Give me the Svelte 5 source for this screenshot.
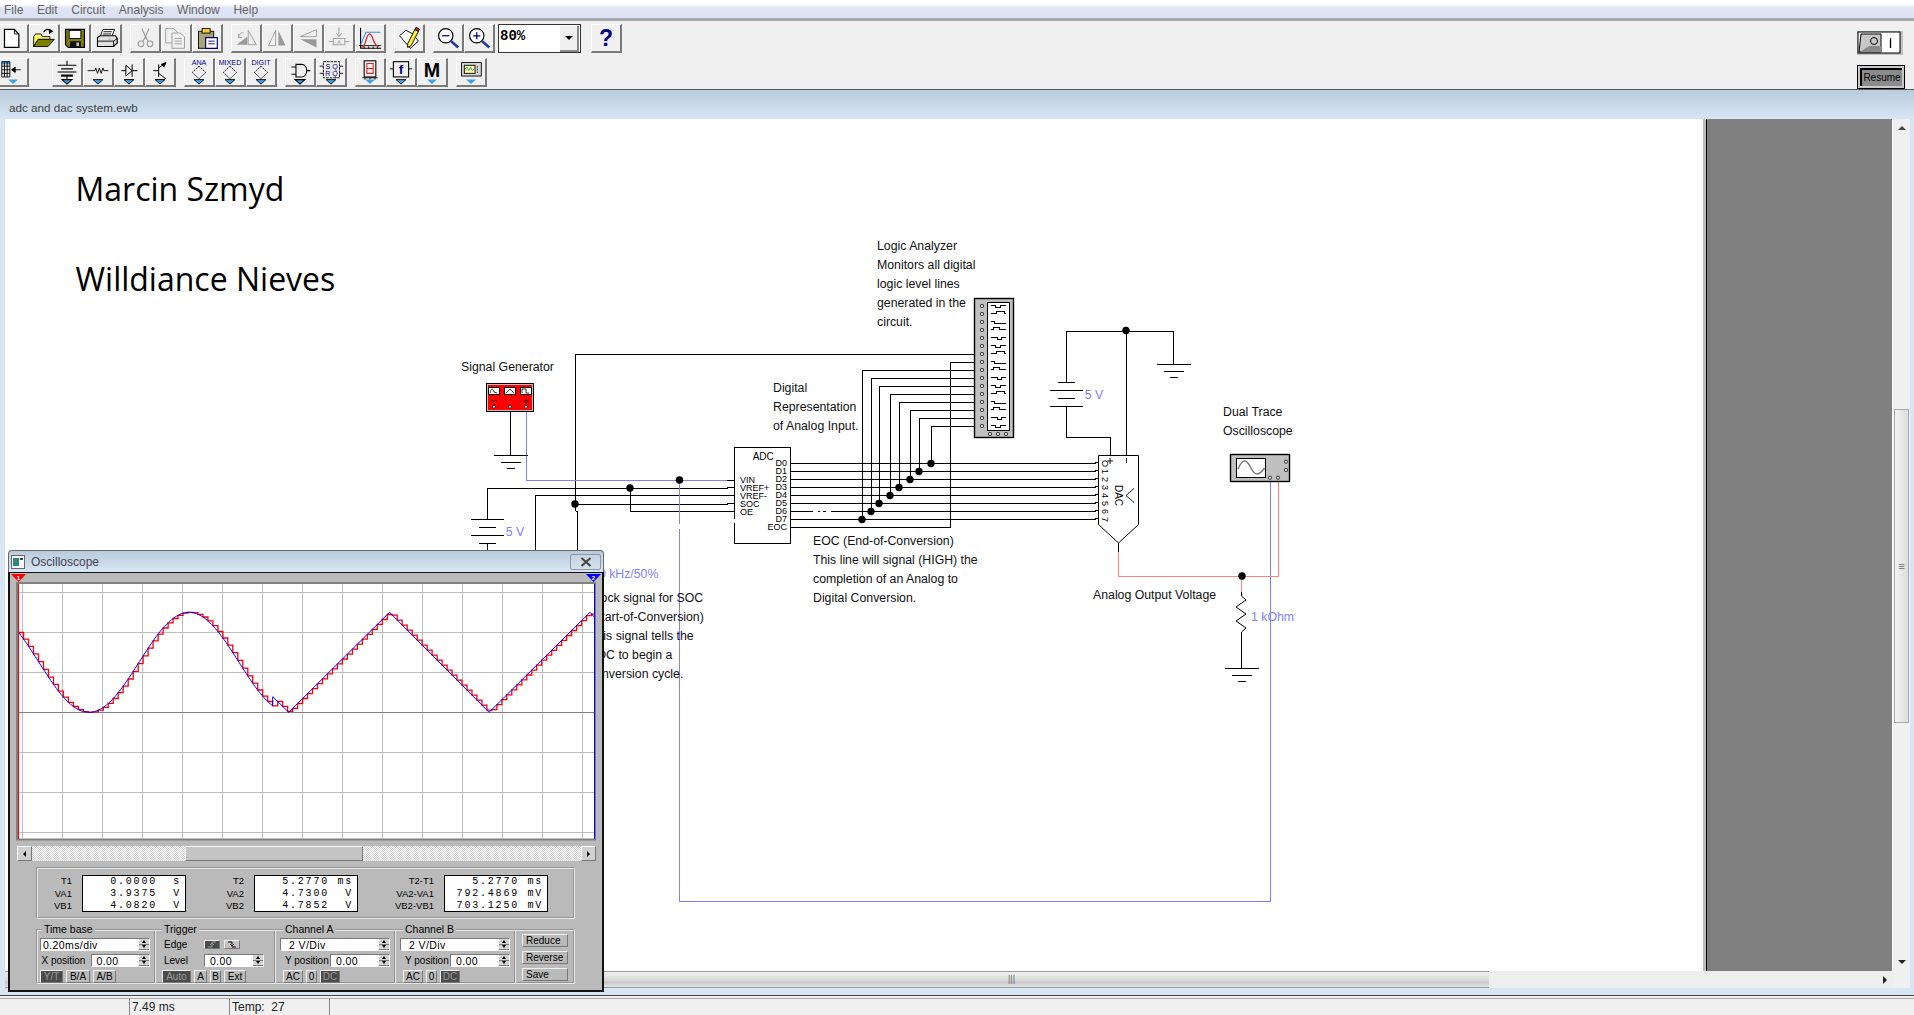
<script>
  // schematic lives in page coordinates, the svg viewBox takes care of the offset
  const menus = ['File', 'Edit', 'Circuit', 'Analysis', 'Window', 'Help'];

  const blackWires = [
    '575.5,511 575.5,354.5 974,354.5',
    '487.5,519 487.5,488.5 727,488.5 727,487.5 734,487.5',
    '535.5,560 535.5,495.5 734,495.5',
    '575.5,504.5 727,504.5 727,503.5 734,503.5',
    '575.5,511 577.5,511 577.5,560',
    '630.5,488 630.5,511.5 734,511.5',
    '510.5,411 510.5,455',
    '727,480.5 734,480.5',
    '790.5,527.5 950.5,527.5 950.5,362.5 974,362.5',
    '1066.5,382 1066.5,331.5 1173.5,331.5 1173.5,364',
    '1126.5,331 1126.5,455',
    '1066.5,406 1066.5,437.5 1110.5,437.5 1110.5,455',
    '1118.5,543 1118.5,552',
    '1241.5,635 1241.5,668',
    '487.5,543 487.5,552'
  ];
  // D0..D7 run to the DAC, each one taps up to the analyzer
  const busX = [931, 919, 910, 899, 890, 879, 871, 862];
  const busRows = busX.map((x, i) => ({ x: x + 0.5, y: 463.5 + 8 * i, top: 426.5 - 8 * i }));

  const grounds = [
    { x: 510.5, y: 455.5 },
    { x: 1173.5, y: 364.5 },
    { x: 1241.5, y: 668.5 }
  ];
  const dots = [
    [679.5, 480], [630, 488], [575, 504], [1126, 330.5], [1242, 576],
    ...busRows.map((r) => [r.x - 0.5, r.y])
  ];
  // small white breaks the screen redraw left behind in the wires
  const breaks = [
    [813, 511, 5], [820, 511, 3], [826, 511, 5], [1075, 480, 4], [1083, 480, 2],
    [1074, 504, 4], [1020, 480, 2], [915, 480, 3], [943, 480, 5], [853, 504, 8], [919, 488, 2]
  ];

  const labels = [
    [877, 247, 'Logic Analyzer'], [877, 266, 'Monitors all digital'], [877, 285, 'logic level lines'],
    [877, 304, 'generated in the'], [877, 323, 'circuit.'],
    [461, 368, 'Signal Generator'],
    [773, 389, 'Digital'], [773, 408, 'Representation'], [773, 427, 'of Analog Input.'],
    [1223, 413, 'Dual Trace'], [1223, 432, 'Oscilloscope'],
    [813, 542, 'EOC (End-of-Conversion)'], [813, 561, 'This line will signal (HIGH) the'],
    [813, 580, 'completion of an Analog to'], [813, 599, 'Digital Conversion.'],
    [1093, 595.5, 'Analog Output Voltage'],
    [589, 599, 'Clock signal for SOC'], [589, 618, '(Start-of-Conversion)'],
    [589, 637, 'This signal tells the'], [589, 656, 'ADC to begin a'], [589, 675, 'conversion cycle.']
  ];
  const blueLabels = [
    [505.7, 533, '5 V'], [1084.7, 395.5, '5 V'], [1251, 618, '1 kOhm'], [575, 575, '1.000 kHz/50%']
  ];
  const adcPins = ['VIN', 'VREF+', 'VREF-', 'SOC', 'OE'];
  const adcOut = ['D0', 'D1', 'D2', 'D3', 'D4', 'D5', 'D6', 'D7', 'EOC'];
  const analyzerRows = Array.from({ length: 16 }, (_, i) => i);
  const stepShapes = ['h5 v2 h5 v-2 h5', 'h6 v-2 h8 v2 h1', 'h4 v2 h11', 'h3 v-2 h6 v2 h6', 'h7 v2 h4 v-2 h4'];
  const genShapes = ['c1 -5 3 -5 4 -1 l3 1', 'l4 -4 l4 4', 'v-4 h4 v4 h3'];

  // scope traces, measured off the reference in its own zoomed units
  const px = (z) => z / 2.529;
  const py = (z) => 545 + z / 3;
  const sine = (z) => 352 - 150 * Math.cos((Math.PI * (z - 478)) / 253);
  const tail = [[690, 455], [730, 502], [985, 202], [1237, 502], [1492, 202], [1502, 215]];

  function trace(z) {
    if (z <= 690) return sine(z);
    for (let i = 0; i < tail.length - 1; i++) {
      const [x0, y0] = tail[i];
      const [x1, y1] = tail[i + 1];
      if (z <= x1) return y0 + ((y1 - y0) * (z - x0)) / (x1 - x0);
    }
    return 215;
  }

  let blueLine = '';
  for (let z = 47; z <= 690; z += 3) blueLine += `${px(z).toFixed(1)},${py(sine(z)).toFixed(1)} `;
  for (const [x, y] of tail) blueLine += `${px(x).toFixed(1)},${py(y).toFixed(1)} `;

  let redLine = '';
  let held = trace(47);
  for (let z = 47; z < 1502; z += 12.6) {
    const next = trace(Math.min(z + 12.6, 1502));
    const xEnd = px(Math.min(z + 12.6, 1502)).toFixed(1);
    redLine += `${px(z).toFixed(1)},${py(held).toFixed(1)} ${xEnd},${py(held).toFixed(1)} `;
    held = next;
  }

  const vGrid = [22.5, 62.5, 102.5, 142.5, 182.5, 222.5, 262.5, 302.5, 342.5, 382.5, 422.5, 462.5, 502.5, 542.5, 582.5];
  const hGrid = [592.5, 632.5, 672.5, 752.5, 792.5, 832.5];

  const readouts = [
    { labels: ['T1', 'VA1', 'VB1'], rows: [['0.0000', 's'], ['3.9375', 'V'], ['4.0820', 'V']] },
    { labels: ['T2', 'VA2', 'VB2'], rows: [['5.2770', 'ms'], ['4.7300', 'V'], ['4.7852', 'V']] },
    { labels: ['T2-T1', 'VA2-VA1', 'VB2-VB1'], rows: [['5.2770', 'ms'], ['792.4869', 'mV'], ['703.1250', 'mV']] }
  ];
</script>

{#snippet spin()}
  <span class="spin"><i class="up"></i><i class="down"></i></span>
{/snippet}

{#snippet drop()}
  <polygon points="10,23 21,23 15.5,28" fill="#3aa0ea" />
{/snippet}

<div class="app">
  <div class="menubar">
    {#each menus as m}<span>{m}</span>{/each}
  </div>
  <div class="menuline"></div>

  <div class="toolbar">
    <div class="rows">
      <div class="row">
        <div class="btn first"><svg viewBox="0 0 31 29"><path d="M6 5H17L22 10V25H6Z" fill="#fff" stroke="#000" stroke-width="1.4" /><path d="M17 5V10H22" fill="none" stroke="#000" /></svg></div>
        <div class="btn"><svg viewBox="0 0 31 29"><path d="M4 24V13L6 10H12L14 13H22V16H9Z" fill="#ffff66" stroke="#000" /><path d="M4 24L9 16H27L20 24Z" fill="#808000" stroke="#000" /><path d="M15 8C17 4 21 4 23 7" fill="none" stroke="#000" stroke-width="1.3" /><path d="M21 4L26 7L21 10Z" fill="#000" /></svg></div>
        <div class="btn"><svg viewBox="0 0 31 29"><path d="M5 5H26V25H8L5 22Z" fill="#808000" stroke="#000" stroke-width="1.4" /><rect x="9" y="6" width="13" height="9" fill="#fff" stroke="#000" /><rect x="10" y="18" width="12" height="7" fill="#111" /><rect x="17" y="19.5" width="3" height="4" fill="#c0c0c0" /></svg></div>
        <div class="btn"><svg viewBox="0 0 31 29"><path d="M12 5H25L22 13H9Z" fill="#fff" stroke="#000" /><path d="M13 7.5H22M12 10H21" stroke="#000" /><path d="M6 14L9 12H26L28 15V20L24 24H6Z" fill="#e0e0e0" stroke="#000" stroke-width="1.3" /><path d="M6 18H24V24M24 18L28 15" fill="none" stroke="#000" /><rect x="18" y="15" width="3" height="1.5" fill="#bb9" /></svg></div>

        <div class="btn grp"><svg viewBox="0 0 31 29" fill="none" stroke="#999" stroke-width="1.2"><path d="M12 4L17 15M20 4L15 15" /><circle cx="11" cy="21" r="3.2" /><circle cx="21" cy="21" r="3.2" /><path d="M13 18L16 13M19 18L16 13" /></svg></div>
        <div class="btn"><svg viewBox="0 0 31 29" fill="#f0f0f0" stroke="#999"><path d="M4 4H13L17 8V20H4Z" /><path d="M11 9H20L25 13V26H11Z" /><path d="M14 15H22M14 18H22M14 21H22" /></svg></div>
        <div class="btn"><svg viewBox="0 0 31 29"><rect x="6" y="7" width="17" height="19" fill="#a6a676" stroke="#000" /><rect x="10" y="4" width="9" height="5" fill="#ffcc33" stroke="#000" /><path d="M14 14H27V26H14Z" fill="#fff" stroke="#000080" stroke-width="1.3" /><path d="M17 18H24M17 21H24" stroke="#000080" /></svg></div>

        <div class="btn grp"><svg viewBox="0 0 31 29"><path d="M5 22L17 13V22Z" fill="#999" /><path d="M18 6L27 22H18Z" fill="none" stroke="#999" /><path d="M8 13C8 9 11 8 13 9M7 10V14H11" fill="none" stroke="#999" /></svg></div>
        <div class="btn"><svg viewBox="0 0 31 29"><path d="M14 6L6 23H14Z" fill="none" stroke="#999" /><path d="M17 6L25 23H17Z" fill="#999" /></svg></div>
        <div class="btn"><svg viewBox="0 0 31 29"><path d="M25 5L7 13H25Z" fill="none" stroke="#999" /><path d="M25 16L7 16L25 25Z" fill="#999" /></svg></div>
        <div class="btn"><svg viewBox="0 0 31 29" fill="none" stroke="#999"><path d="M15.5 3V12M12.5 9L15.5 13L18.5 9" /><rect x="9" y="15" width="13" height="7" /><path d="M4 18.5H9M22 18.5H27" /><text x="15.5" y="21" text-anchor="middle" class="tiny" fill="#999" stroke="none">A</text></svg></div>
        <div class="btn"><svg viewBox="0 0 31 29" fill="none"><path d="M5 3V26H28" stroke="#000" stroke-width="1.2" /><path d="M3 23H28M9 26V24M14 26V24M19 26V24M24 26V24" stroke="#000" /><path d="M5 22L11 8H27" stroke="#3a8ee8" stroke-width="1.2" /><path d="M6 25C11 25 11 10 15 10C19 10 19 24 25 24" stroke="#e02020" stroke-width="1.4" /></svg></div>

        <div class="btn grp"><svg viewBox="0 0 31 29"><path d="M5 12L12 6L20 10L26 18L17 26Z" fill="#fff" stroke="#000" /><path d="M14 21L22 5L26 7L18 23L14 25Z" fill="#ffee33" stroke="#000" /><path d="M22 5L23.5 2.5L27 4.5L26 7Z" fill="#e02020" stroke="#000" /></svg></div>

        <div class="btn grp"><svg viewBox="0 0 31 29" fill="none"><circle cx="13" cy="12" r="8" fill="#fff" stroke="#000" stroke-width="1.3" /><path d="M9 12H17" stroke="#000080" stroke-width="1.4" /><path d="M19 18L27 25" stroke="#2040a0" stroke-width="3" /></svg></div>
        <div class="btn"><svg viewBox="0 0 31 29" fill="none"><circle cx="13" cy="12" r="8" fill="#fff" stroke="#000" stroke-width="1.3" /><path d="M9 12H17M13 8V16" stroke="#000080" stroke-width="1.4" /><path d="M19 18L27 25" stroke="#2040a0" stroke-width="3" /></svg></div>

        <div class="combo">
          <span class="combo-val">80%</span>
          <span class="combo-btn"><i></i></span>
        </div>
        <div class="btn help"><span>?</span></div>
      </div>

      <div class="row">
        <div class="btn first"><svg viewBox="0 0 31 29"><rect x="3" y="3" width="9" height="3" fill="#3aa0ea" /><path d="M3 3H12V20H3ZM3 8H12M3 12H12M3 16H12M6 3V20M9 3V20" fill="none" stroke="#000" /><path d="M14 12H24M14 12L18 9V15Z" stroke="#000" />{@render drop()}</svg></div>
        <div class="btn wide"><svg viewBox="0 0 31 29" stroke="#000" stroke-width="1.2"><path d="M15.5 2V7M5 7H26M9 11H22" fill="none" /><path d="M5 14.5H26" /><path d="M9 18.5H22" stroke-width="2.4" /><path d="M15.5 19V23" />{@render drop()}</svg></div>
        <div class="btn"><svg viewBox="0 0 31 29" fill="none" stroke="#000"><path d="M4 13H12L13 10L15 16L17 10L19 16L21 10L22 13H27" />{@render drop()}</svg></div>
        <div class="btn"><svg viewBox="0 0 31 29" fill="none" stroke="#000" stroke-width="1.1"><path d="M7 13H12M19 13H25M19 6V20" /><path d="M12 7L19 13L12 19Z" />{@render drop()}</svg></div>
        <div class="btn"><svg viewBox="0 0 31 29" fill="none" stroke="#000" stroke-width="1.1"><path d="M8 13H14M14 6V20M14 10L22 4M14 16L22 22" /><path d="M17 6L22 4L20 9Z" fill="#000" />{@render drop()}</svg></div>

        <div class="btn grp"><svg viewBox="0 0 31 29" fill="none" stroke="#000"><text x="15.5" y="7" text-anchor="middle" class="mini" fill="#000080" stroke="none">ANA</text><path d="M15.5 8L23 15L15.5 22L8 15Z" stroke-dasharray="2 1" />{@render drop()}</svg></div>
        <div class="btn"><svg viewBox="0 0 31 29" fill="none" stroke="#000"><text x="15.5" y="7" text-anchor="middle" class="mini" fill="#000080" stroke="none">MIXED</text><path d="M15.5 8L23 15L15.5 22L8 15Z" stroke-dasharray="2 1" />{@render drop()}</svg></div>
        <div class="btn"><svg viewBox="0 0 31 29" fill="none" stroke="#000"><text x="15.5" y="7" text-anchor="middle" class="mini" fill="#000080" stroke="none">DIGIT</text><path d="M15.5 8L23 15L15.5 22L8 15Z" stroke-dasharray="2 1" />{@render drop()}</svg></div>

        <div class="btn grp"><svg viewBox="0 0 31 29" fill="none" stroke="#000" stroke-width="1.2"><path d="M11 6H17C25 6 25 20 17 20H11ZM6 9H11M6 17H11M23 13H27" />{@render drop()}</svg></div>
        <div class="btn"><svg viewBox="0 0 31 29" fill="none" stroke="#000"><rect x="7" y="3" width="18" height="18" stroke-dasharray="3 1" /><path d="M3 8H7M3 16H7M25 8H29M25 16H29" /><text x="12" y="11" text-anchor="middle" class="mini" fill="#000080" stroke="none">S</text><text x="20" y="11" text-anchor="middle" class="mini" fill="#000080" stroke="none">Q</text><text x="12" y="19" text-anchor="middle" class="mini" fill="#000080" stroke="none">R</text><text x="20" y="19" text-anchor="middle" class="mini" fill="#000080" stroke="none">Q</text>{@render drop()}</svg></div>

        <div class="btn grp"><svg viewBox="0 0 31 29" fill="none"><rect x="9" y="2" width="13" height="18" stroke="#000" stroke-width="1.2" /><path d="M12 5H19V16H12ZM12 10.5H19" stroke="#e02020" stroke-width="1.2" /><path d="M7 21H24M10 21V23M15.5 21V23M21 21V23" stroke="#000" />{@render drop()}</svg></div>
        <div class="btn"><svg viewBox="0 0 31 29" fill="none" stroke="#000"><rect x="7" y="3" width="17" height="17" stroke-width="1.2" /><path d="M3 11H7M24 11H28" /><text x="15.5" y="17" text-anchor="middle" class="func" fill="#000080" stroke="none">f</text>{@render drop()}</svg></div>
        <div class="btn"><svg viewBox="0 0 31 29"><text x="15.5" y="20" text-anchor="middle" class="bigm">M</text>{@render drop()}</svg></div>

        <div class="btn grp"><svg viewBox="0 0 31 29"><rect x="5" y="4" width="22" height="15" fill="#d8d8d8" stroke="#000" /><rect x="8" y="7" width="12" height="9" fill="#fff8a0" stroke="#000" /><path d="M9 11L11 9L13 13L15 9L17 13L19 11" fill="none" stroke="#2a9a9a" /><path d="M22.5 8V9.5M22.5 11V12.5M22.5 14V15.5" stroke="#000" />{@render drop()}</svg></div>
      </div>
    </div>

    <div class="power">
      <div class="switch">
        <svg viewBox="0 0 46 24" width="46" height="24">
          <rect width="46" height="24" fill="#c0c0c0" />
          <rect x="1" y="1" width="42" height="21" fill="#fff" stroke="#000" />
          <path d="M2 21L4 3H24V21Z" fill="#c8c8c8" stroke="#000" />
          <path d="M3 21L12 15H24V21Z" fill="#8a8a8a" />
          <circle cx="17" cy="10" r="3.5" fill="none" stroke="#000" />
          <path d="M33.5 7V17" stroke="#000" stroke-width="1.3" />
        </svg>
      </div>
      <div class="resume"><span>Resume</span></div>
    </div>
  </div>

  <div class="doc-title">adc and dac system.ewb</div>

  <div class="mdi">
    <div class="client">
      <svg class="canvas" viewBox="5 119 1698 852" width="1698" height="852">
        <text x="75.5" y="200.5" class="author">Marcin Szmyd</text>
        <text x="75.5" y="291" class="author">Willdiance Nieves</text>

        {#each blackWires as w}<polyline points={w} class="wire" />{/each}

        {#each busRows as r}
          <polyline points="790.5,{r.y} 1093,{r.y} 1098,{r.y - 1}" class="wire" />
          <polyline points="{r.x},{r.y} {r.x},{r.top} 974,{r.top}" class="wire" />
        {/each}

        <polyline points="526.5,411 526.5,480.5 727,480.5" class="blue" />
        <polyline points="679.5,480 679.5,901.5 1270.5,901.5 1270.5,478" class="blue" />
        <polyline points="1118.5,552 1118.5,576.5 1278.5,576.5 1278.5,478" class="red" />
        <polyline points="1241.5,576 1241.5,592" class="red" />

        {#each breaks as [x, y, w]}<rect {x} y={y} width={w} height="2" fill="#fff" />{/each}
        <rect x="678" y="524" width="3" height="5" fill="#fff" />

        {#each grounds as g}
          <path d="M{g.x - 17} {g.y}H{g.x + 17}M{g.x - 10} {g.y + 6.5}H{g.x + 10}M{g.x - 4} {g.y + 13}H{g.x + 4}" class="wire" />
        {/each}
        <!-- batteries: the left one has its long plate on top, the right one is flipped -->
        <path d="M471 519.5H504M479 527.5H496M471 535.5H504M479 543.5H496" class="wire" />
        <path d="M1058 382.5H1075M1050 390.5H1083M1058 398.5H1075M1050 406.5H1083" class="wire" />

        <polyline points="1241.5,592 1241.5,596 1246,600 1236,607 1246,614 1236,621 1246,628 1241.5,632 1241.5,635" fill="none" stroke="#000" />

        <!-- function generator -->
        <rect x="486.5" y="383.5" width="47" height="28" fill="#c0c0c0" stroke="#000" />
        <rect x="488" y="385" width="44" height="25" fill="#f00" />
        {#each [488.5, 504.5, 520.5] as gx, i}
          <rect x={gx} y="387.5" width="11" height="7" fill="#fff" stroke="#000" />
          <path d="M{gx + 1.5} 393 {genShapes[i]}" fill="none" stroke="#000" stroke-width="0.8" />
        {/each}
        {#each [494, 510, 526] as tx}<circle cx={tx} cy="406.7" r="1.5" fill="#fff" stroke="#000" stroke-width="0.8" />{/each}
        <path d="M491.5 401H496.5M523.5 401H528.5M526 398.5V403.5" stroke="#000" stroke-width="0.8" />

        <!-- ADC -->
        <path d="M734.5 519V447.5H790.5V543.5H734.5V523" class="wire" style="fill:#fff" />
        <text x="752.7" y="457" class="chip">ADC</text>
        {#each adcPins as p, i}<text x="740" y={480.5 + 8 * i} class="pin">{p}</text>{/each}
        {#each adcOut as p, i}<text x="787" y={464 + 8 * i} class="pin end">{p}</text>{/each}

        <!-- logic analyzer -->
        <rect x="974.5" y="298.5" width="39" height="139" fill="#c0c0c0" stroke="#000" stroke-width="1.4" />
        <rect x="987.5" y="302.5" width="22" height="128" fill="#fff" stroke="#000" />
        {#each analyzerRows as n}
          <circle cx="982" cy={306 + 8 * n} r="1.6" fill="#fff" stroke="#000" stroke-width="0.8" />
          <path d="M990.5 {305.5 + 8 * n}{stepShapes[n % stepShapes.length]}" class="wire" />
        {/each}
        {#each [990, 998, 1006] as tx}<circle cx={tx} cy="434" r="1.6" fill="#fff" stroke="#000" stroke-width="0.8" />{/each}

        <!-- DAC -->
        <path d="M1098.5 455.5H1138.5V524.5L1118.5 543L1098.5 524.5Z" fill="#fff" stroke="#000" />
        {#each [0, 1, 2, 3, 4, 5, 6, 7] as n}
          <text transform="translate(1104.5 {463.5 + 8 * n}) rotate(90)" class="pin mid">{n === 0 ? 'O' : n}</text>
        {/each}
        <path d="M1107 461H1113M1110 458V464M1126.5 458V463" stroke="#000" stroke-width="0.9" />
        <text transform="translate(1118 495.5) rotate(90)" class="chip mid">DAC</text>
        <path d="M1134 488.5L1126 495.5L1134 502.5" fill="none" stroke="#000" stroke-width="0.9" />

        <!-- oscilloscope instrument -->
        <rect x="1230.5" y="454.5" width="59" height="27" fill="#c0c0c0" stroke="#000" stroke-width="1.4" />
        <rect x="1236.5" y="458.5" width="29" height="19" fill="#fff" stroke="#000" />
        <path d="M1238 469C1243 457 1247 460 1251 468C1255 476 1259 476 1264.5 468" fill="none" stroke="#808080" stroke-width="1.6" />
        {#each [[1286, 461.7], [1286, 470], [1270, 477.7], [1278, 477.7]] as [cx, cy]}
          <circle {cx} {cy} r="1.6" fill="#fff" stroke="#000" stroke-width="0.8" />
        {/each}

        {#each dots as [cx, cy]}<circle {cx} {cy} r="3.7" fill="#000" />{/each}

        {#each labels as [x, y, t]}<text {x} {y} class="note">{t}</text>{/each}
        {#each blueLabels as [x, y, t]}<text {x} {y} class="note value">{t}</text>{/each}
      </svg>

      <div class="pane"></div>

      <div class="vscroll">
        <span class="arrow up-a"></span>
        <div class="vthumb"><span>≡</span></div>
        <span class="arrow down-a"></span>
      </div>
    </div>

    <div class="hscroll">
      <div class="hthumb"><span>|||</span></div>
      <div class="htrack"><i></i></div>
      <div class="corner"></div>
    </div>
  </div>

  <div class="sep"></div>

  <div class="status">
    <div class="cell blank"></div>
    <div class="cell time">7.49 ms</div>
    <div class="cell temp">Temp: &nbsp;27</div>
    <div class="cell rest"></div>
  </div>

  <!-- scope window floats over the schematic -->
  <div class="scope">
    <div class="scope-title">
      <svg viewBox="0 0 14 14" width="14" height="14"><rect x=".5" y=".5" width="13" height="13" fill="#fff" stroke="#667" /><rect x="2" y="3" width="6" height="8" fill="#2a8a7a" /><rect x="9" y="3" width="3" height="2" fill="#345" /></svg>
      <span>Oscilloscope</span>
      <div class="close">
        <svg viewBox="0 0 12 10" width="12" height="10"><path d="M1.5 1L10.5 9M10.5 1L1.5 9" stroke="#444" stroke-width="2" /></svg>
      </div>
    </div>

    <div class="scope-body">
      <svg class="plot" viewBox="10 573 592 268" width="592" height="268">
        <rect x="17" y="583" width="578" height="256.5" fill="#fff" stroke="#808080" stroke-width="2" />
        {#each vGrid as x}<path d="M{x} 584V838" stroke="#bdbdbd" />{/each}
        {#each hGrid as y}<path d="M18 {y}H594" stroke="#bdbdbd" />{/each}
        <path d="M18 712.5H594" stroke="#808080" />
        <polyline points={redLine} fill="none" stroke="#f00" stroke-width="1.3" />
        <polyline points={blueLine} fill="none" stroke="#00f" stroke-width="1" />
        <path d="M18.5 584V839" stroke="#f00" />
        <path d="M594.5 584V839" stroke="#00f" />
        <polygon points="11,574 26,574 18.5,582" fill="#f00" />
        <text x="18.5" y="578.5" class="flag">1</text>
        <polygon points="586,574 601,574 593.5,582" fill="#00f" />
        <text x="593.5" y="578.5" class="flag">2</text>
      </svg>

      <div class="sbar">
        <span class="sb-btn"><i class="tri-l"></i></span>
        <div class="sb-track">
          <div class="sb-thumb"></div>
        </div>
        <span class="sb-btn"><i class="tri-r"></i></span>
      </div>

      <div class="readout">
        {#each readouts as group}
          <div class="r-labels">
            {#each group.labels as l}<div>{l}</div>{/each}
          </div>
          <div class="r-box">
            {#each group.rows as [v, u]}
              <div class="r-row"><span>{v}</span><span>{u}</span></div>
            {/each}
          </div>
        {/each}
      </div>

      <div class="controls">
        <div class="sect base">
          <span class="legend leg-base">Time base</span>
          <div class="line field wide-field">0.20ms/div{@render spin()}</div>
          <div class="line"><span class="lbl x-lbl">X position</span><div class="field num">0.00{@render spin()}</div></div>
          <div class="line keys"><b class="key on k23">Y/T</b><b class="key k24">B/A</b><b class="key k23">A/B</b></div>
        </div>
        <div class="sect trig">
          <span class="legend">Trigger</span>
          <div class="line"><span class="lbl edge-lbl">Edge</span>
            <b class="edge on"><svg viewBox="0 0 10 7" width="10" height="7"><path d="M1 6H5V1H9M3 4L5 2L7 4" fill="none" stroke="#999" /></svg></b>
            <b class="edge"><svg viewBox="0 0 10 7" width="10" height="7"><path d="M1 1H5V6H9M3 3L5 5L7 3" fill="none" stroke="#000" /></svg></b>
          </div>
          <div class="line"><span class="lbl edge-lbl">Level</span><div class="field num wider">0.00{@render spin()}</div></div>
          <div class="line keys shift-l"><b class="key on k-auto">Auto</b><b class="key k13">A</b><b class="key k11">B</b><b class="key k22">Ext</b></div>
        </div>
        <div class="sect chan">
          <span class="legend leg-ch">Channel A</span>
          <div class="line field wide-field indent">2 V/Div{@render spin()}</div>
          <div class="line ypos"><span class="lbl y-lbl">Y position</span><div class="field num wider">0.00{@render spin()}</div></div>
          <div class="line keys push"><b class="key k20">AC</b><b class="key k11">0</b><b class="key on k20">DC</b></div>
        </div>
        <div class="sect chan">
          <span class="legend leg-ch">Channel B</span>
          <div class="line field wide-field indent">2 V/Div{@render spin()}</div>
          <div class="line ypos"><span class="lbl y-lbl">Y position</span><div class="field num wider">0.00{@render spin()}</div></div>
          <div class="line keys push"><b class="key k20">AC</b><b class="key k11">0</b><b class="key on k20">DC</b></div>
        </div>
        <div class="sect last">
          <b class="key side">Reduce</b>
          <b class="key side">Reverse</b>
          <b class="key side save">Save</b>
        </div>
      </div>
    </div>
  </div>
</div>

<style>
  :global(body) {
    margin: 0;
    overflow: hidden;
    font-family: 'Liberation Sans', Arial, sans-serif;
  }

  .app {
    position: relative;
    width: 1914px;
    height: 1015px;
    display: flex;
    flex-direction: column;
    overflow: hidden;
    background: #f0f0f0;
  }

  .menubar {
    height: 18px;
    display: flex;
    align-items: center;
    gap: 13.6px;
    padding: 2px 0 0 4px;
    box-sizing: border-box;
    font-size: 12px;
    color: #666;
    background: linear-gradient(#fff 0, #fff 4px, #dfe4f3 8px, #dde3f3 100%);
  }

  .menuline {
    height: 3px;
    background: #a9a9ad;
  }

  .toolbar {
    height: 68px;
    box-sizing: content-box;
    display: flex;
    justify-content: space-between;
    background: #f0f0f0;
    border-bottom: 1px solid #555;
  }

  .rows {
    display: flex;
    flex-direction: column;
    gap: 5px;
    padding-top: 3px;
  }

  .row {
    display: flex;
    height: 29px;
  }

  .btn {
    width: 31px;
    height: 29px;
    box-sizing: border-box;
    border: 1px solid;
    border-color: #fff #7a7a7a #7a7a7a #fff;
    border-width: 1px 2px 2px 1px;
    background: #f0f0f0;
    flex: none;
  }

  .btn svg {
    display: block;
    width: 28px;
    height: 26px;
    overflow: visible;
  }

  .first {
    margin-left: -2px;
  }

  .grp {
    margin-left: 8px;
  }

  .wide {
    margin-left: 23px;
  }

  .help {
    margin-left: 10px;
    display: flex;
    align-items: center;
    justify-content: center;
  }

  .help span {
    font: bold 23px 'Liberation Sans', sans-serif;
    color: #000080;
  }

  .combo {
    margin: 0 0 0 3px;
    width: 83px;
    height: 29px;
    box-sizing: border-box;
    background: #fff;
    border: 1px solid #333;
    display: flex;
    justify-content: space-between;
    padding: 1px;
  }

  .combo-val {
    font: bold 14px 'Liberation Mono', monospace;
    line-height: 20px;
  }

  .combo-btn {
    width: 17px;
    height: 24px;
    background: #f0f0f0;
    border-right: 2px solid #888;
    border-bottom: 2px solid #888;
    display: flex;
    align-items: center;
    justify-content: center;
  }

  .combo-btn i {
    border: 4px solid transparent;
    border-top: 4px solid #000;
    border-bottom: 0;
  }

  .power {
    width: 57px;
    display: flex;
    flex-direction: column;
    gap: 10px;
    padding-top: 10px;
  }

  .switch {
    height: 24px;
  }

  .switch svg {
    display: block;
  }

  .resume {
    width: 48px;
    height: 24px;
    box-sizing: border-box;
    border: 1px solid #000;
    padding: 2px;
    background: #c8c8c8;
  }

  .resume span {
    display: block;
    height: 18px;
    box-sizing: border-box;
    background: #8c8c8c;
    border-top: 2px solid #000;
    border-left: 2px solid #000;
    font-size: 10px;
    line-height: 15px;
    text-align: center;
  }

  .doc-title {
    height: 29px;
    box-sizing: border-box;
    padding: 11px 0 0 9px;
    font-size: 11.7px;
    line-height: 14px;
    color: #3c3c3c;
    background: linear-gradient(#b9cbdb, #d8e6f4);
  }

  .mdi {
    background: #d8e6f4;
    padding: 0 4px 7px 5px;
  }

  .client {
    display: flex;
    height: 852px;
  }

  .canvas {
    display: block;
    flex: none;
    background: #fff;
  }

  .author {
    font: 32px 'Open Sans', sans-serif;
    fill: #000;
  }

  .note {
    font: 12.3px 'Liberation Sans', sans-serif;
    dominant-baseline: middle;
    fill: #111;
  }

  .value {
    fill: #7f7fff;
  }

  .wire,
  .blue,
  .red {
    fill: none;
    stroke: #000;
    stroke-width: 1;
    shape-rendering: crispEdges;
  }

  .blue {
    stroke: #7f7fff;
  }

  .red {
    stroke: #ff7f7f;
  }

  .chip {
    font: 10px 'Liberation Sans', sans-serif;
    dominant-baseline: middle;
  }

  .pin {
    font: 9px 'Liberation Sans', sans-serif;
    dominant-baseline: middle;
  }

  .end {
    text-anchor: end;
  }

  .mid {
    text-anchor: middle;
  }

  .tiny {
    font: 6px 'Liberation Sans', sans-serif;
  }

  .mini {
    font: 8px 'Liberation Sans', sans-serif;
  }

  .func {
    font: bold 15px 'Liberation Sans', sans-serif;
  }

  .bigm {
    font: bold 22px 'Liberation Sans', sans-serif;
  }

  .pane {
    width: 185px;
    box-sizing: content-box;
    background: #808080;
    border-left: 1px solid #000;
    border-right: 1px solid #fff;
    box-shadow: -3px 0 0 #bcbcbc;
    margin-left: 3px;
  }

  .vscroll {
    width: 17px;
    background: #f0f0f0;
    position: relative;
    display: flex;
    flex-direction: column;
    align-items: center;
    justify-content: space-between;
    padding: 7px 0;
    box-sizing: border-box;
  }

  .arrow {
    border: 4px solid transparent;
  }

  .up-a {
    border-top: 0;
    border-bottom: 4px solid #444;
  }

  .down-a {
    border-bottom: 0;
    border-top: 4px solid #222;
  }

  /* scrollbar thumb sits over the track */
  .vthumb {
    position: absolute;
    top: 290px;
    left: 1px;
    width: 15px;
    height: 314px;
    background: linear-gradient(90deg, #f4f4f4, #dcdcdc);
    border: 1px solid #aaa;
    box-sizing: border-box;
    display: flex;
    align-items: center;
    justify-content: center;
    font-size: 11px;
    color: #666;
  }

  .hscroll {
    display: flex;
    height: 17px;
  }

  .hthumb {
    width: 1484px;
    box-sizing: border-box;
    background: linear-gradient(#f0f0f0, #d8d8d8 55%, #c8c8c8 70%, #e4e4e4);
    border-top: 1px solid #999;
    border-bottom: 1px solid #999;
    display: flex;
    justify-content: flex-end;
    padding-right: 474px;
    font-size: 9px;
    line-height: 14px;
    color: #666;
  }

  .htrack {
    width: 404px;
    background: #eee;
    display: flex;
    justify-content: flex-end;
    align-items: center;
    padding-right: 6px;
    box-sizing: border-box;
  }

  .htrack i {
    border: 4px solid transparent;
    border-left: 4px solid #222;
    border-right: 0;
  }

  .corner {
    width: 17px;
    background: #f0f0f0;
  }

  .sep {
    height: 4px;
    box-sizing: border-box;
    border-top: 1px solid #444;
    border-bottom: 1px solid #a8a8a8;
  }

  .status {
    height: 16px;
    display: flex;
    font-size: 12px;
    line-height: 16px;
    color: #222;
  }

  .cell {
    box-sizing: border-box;
    border-left: 1px solid #888;
    padding-left: 2px;
  }

  .blank {
    width: 129px;
    border: 0;
  }

  .time {
    width: 100px;
  }

  .temp {
    width: 100px;
  }

  .rest {
    flex: 1;
  }

  .scope {
    position: absolute;
    left: 8px;
    top: 550px;
    width: 596px;
    height: 442px;
    display: flex;
    flex-direction: column;
    font-size: 10px;
  }

  .scope-title {
    height: 22px;
    box-sizing: border-box;
    border: 1px solid #6a6a6a;
    border-bottom: 0;
    border-radius: 4px 4px 0 0;
    background: linear-gradient(#b9cbdb, #d8e6f4);
    display: flex;
    align-items: center;
    gap: 6px;
    padding: 0 2px;
    font-size: 12px;
    color: #445;
  }

  .scope-title span {
    flex: 1;
  }

  .close {
    width: 31px;
    height: 16px;
    box-sizing: border-box;
    border: 1px solid #8a97a5;
    border-radius: 2px;
    background: linear-gradient(#c5d3e0, #d4e0ec);
    display: flex;
    align-items: center;
    justify-content: center;
  }

  .scope-body {
    flex: 1;
    background: #bababa;
    border: 2px solid #111;
    border-top-width: 1px;
  }

  .plot {
    display: block;
  }

  .flag {
    font: bold 6px 'Liberation Sans', sans-serif;
    fill: #fff;
    text-anchor: middle;
    dominant-baseline: middle;
  }

  .sbar {
    display: flex;
    height: 15px;
    margin: 5px 6px 0 7px;
  }

  .sb-btn {
    width: 15px;
    box-sizing: border-box;
    background: #d0d0d0;
    border: 1px solid;
    border-color: #fff #777 #777 #fff;
    display: flex;
    align-items: center;
    justify-content: center;
    flex: none;
  }

  .tri-l,
  .tri-r {
    border: 3px solid transparent;
  }

  .tri-l {
    border-left: 0;
    border-right: 3px solid #000;
  }

  .tri-r {
    border-right: 0;
    border-left: 3px solid #000;
  }

  .sb-track {
    flex: 1;
    background: repeating-conic-gradient(#fff 0 25%, #d2d2d2 0 50%) 0 0 / 2px 2px;
  }

  .sb-thumb {
    margin-left: 153px;
    width: 178px;
    height: 100%;
    box-sizing: border-box;
    background: #c4c4c4;
    border: 1px solid;
    border-color: #f4f4f4 #777 #777 #f4f4f4;
  }

  .readout {
    margin: 6px 0 0 26px;
    width: 539px;
    height: 52px;
    box-sizing: border-box;
    border: 2px groove #e8e8e8;
    display: grid;
    grid-template-columns: 44px 104px 68px 104px 86px 104px;
    padding-top: 6px;
  }

  .r-labels {
    text-align: right;
    padding-right: 10px;
    line-height: 12.5px;
    font-size: 9.5px;
    padding-top: 0;
  }

  .r-box {
    height: 37px;
    box-sizing: border-box;
    background: #fff;
    border: 1px solid #000;
    font: 10px 'Liberation Mono', monospace;
    line-height: 12px;
    letter-spacing: 1.8px;
  }

  .r-row {
    display: grid;
    grid-template-columns: 74px 24px;
    text-align: right;
  }

  .controls {
    margin: 10px 0 0 26px;
    width: 539px;
    height: 55px;
    box-sizing: border-box;
    border: 2px groove #e8e8e8;
    display: grid;
    grid-template-columns: 118px 120px 120px 120px 1fr;
  }

  .sect {
    position: relative;
    box-sizing: border-box;
    border-right: 2px groove #e8e8e8;
    padding: 7px 0 0 3px;
    display: flex;
    flex-direction: column;
    gap: 3px;
  }

  .base {
    padding-left: 2px;
  }

  .trig {
    padding-left: 8px;
  }

  .chan {
    padding-left: 4px;
  }

  .last {
    border-right: 0;
    padding: 3px 0 0 6px;
    gap: 4px;
  }

  /* legend label lies over the groove */
  .legend {
    position: absolute;
    top: -8px;
    left: 6px;
    padding: 0 2px;
    background: #bababa;
    line-height: 12px;
    font-size: 10.5px;
  }

  .leg-base {
    left: 4px;
  }

  .leg-ch {
    left: 7px;
  }

  .line {
    height: 13px;
    display: flex;
    align-items: center;
    white-space: nowrap;
  }

  .lbl {
    flex: none;
  }

  .x-lbl {
    width: 49px;
    padding-left: 1.5px;
  }

  .edge-lbl {
    width: 40px;
  }

  .y-lbl {
    width: 45px;
  }

  .field {
    position: relative;
    background: #fff;
    box-sizing: border-box;
    height: 13px;
    line-height: 12px;
    padding-left: 2px;
    font-size: 10.5px;
    letter-spacing: .4px;
    flex: none;
  }

  .wide-field {
    width: 110px;
    border: 1px solid #777;
    border-right-color: #fff;
    border-bottom-color: #fff;
  }

  .indent {
    padding-left: 8px;
  }

  .num {
    width: 59px;
    padding-left: 5px;
    border: 1px solid #777;
    border-right-color: #fff;
    border-bottom-color: #fff;
  }

  .wider {
    width: 60px;
  }

  .spin {
    position: absolute;
    right: 0;
    top: 0;
    bottom: 0;
    width: 10px;
    display: flex;
    flex-direction: column;
    background: #d4d4d4;
  }

  .spin i {
    flex: 1;
    display: flex;
    align-items: center;
    justify-content: center;
    position: relative;
    border-bottom: 1px solid #777;
  }

  .spin i::after {
    content: '';
    border: 2.5px solid transparent;
  }

  .spin .up::after {
    border-top: 0;
    border-bottom: 3px solid #000;
  }

  .spin .down::after {
    border-bottom: 0;
    border-top: 3px solid #000;
  }

  .keys {
    gap: 3px;
  }

  .key {
    display: block;
    height: 13px;
    box-sizing: border-box;
    font-weight: normal;
    text-align: center;
    line-height: 11px;
    border: 1px solid;
    border-color: #f0f0f0 #777 #777 #f0f0f0;
    background: #bababa;
    flex: none;
  }

  .key.on {
    background: #4a4a4a;
    color: #9a9a9a;
  }

  .k23 {
    width: 23px;
  }

  .k24 {
    width: 24px;
  }

  .k-auto {
    width: 29px;
  }

  .k13 {
    width: 13px;
  }

  .k11 {
    width: 11px;
  }

  .k22 {
    width: 22px;
  }

  .k20 {
    width: 20px;
  }

  .shift-l {
    margin-left: -2px;
  }

  .ypos {
    padding-left: 5px;
  }

  .push {
    padding-left: 3px;
  }

  .edge {
    display: flex;
    align-items: center;
    justify-content: center;
    width: 16px;
    height: 9px;
    margin-right: 4px;
    background: #c4c4c4;
    border: 1px solid;
    border-color: #f0f0f0 #777 #777 #f0f0f0;
    box-sizing: border-box;
  }

  .edge svg {
    display: block;
  }

  .edge.on {
    background: #4a4a4a;
  }

  .side {
    width: 46px;
    text-align: left;
    padding-left: 3px;
  }

  .save {
    margin-top: 0;
  }
</style>
